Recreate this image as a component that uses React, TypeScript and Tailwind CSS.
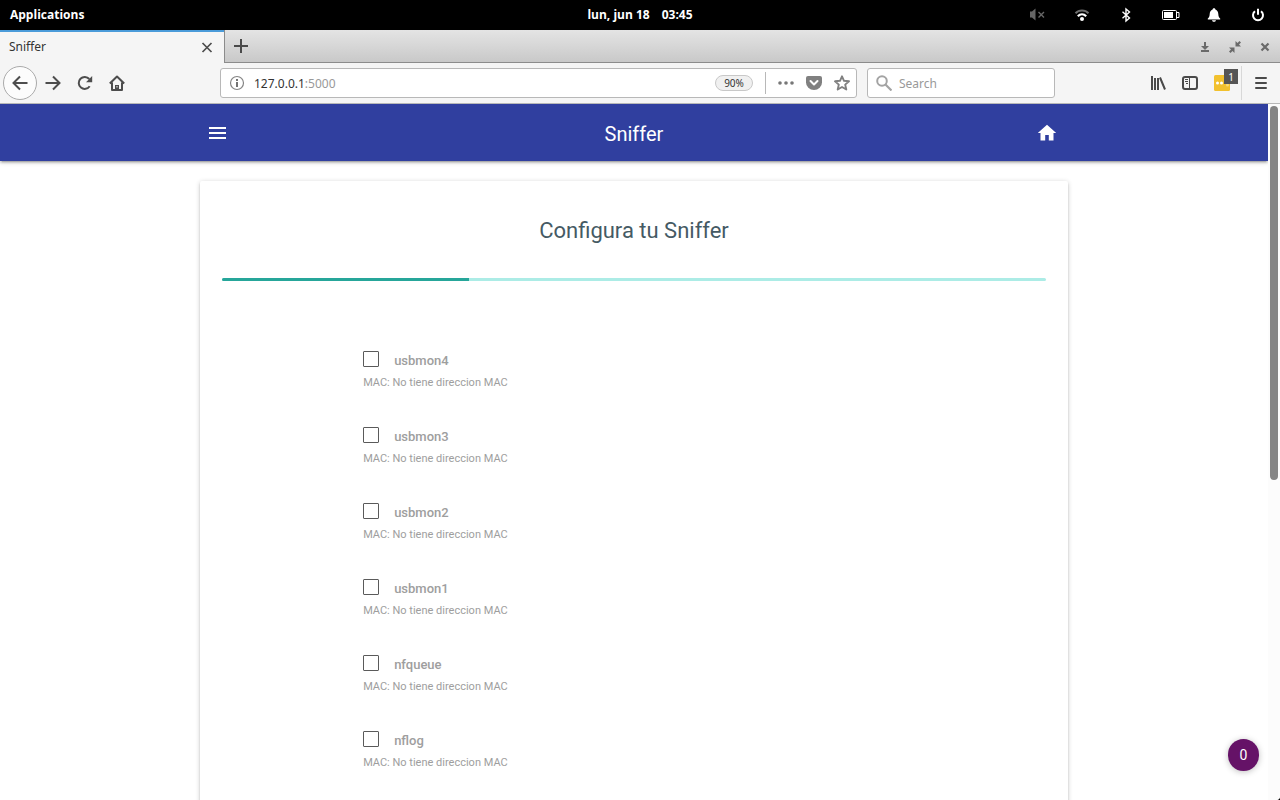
import type { ReactNode } from "react";

const interfaces = ["usbmon4", "usbmon3", "usbmon2", "usbmon1", "nfqueue", "nflog"];
const progress = 30;

function Icon({ size = 16, children }: { size?: number; children: ReactNode }) {
  return (
    <svg width={size} height={size} viewBox={`0 0 ${size} ${size}`} fill="none" aria-hidden="true" className="block shrink-0">
      {children}
    </svg>
  );
}

function SystemPanel() {
  return (
    <header className="grid h-[30px] shrink-0 grid-cols-3 items-center bg-black px-[10px] font-['Open_Sans',sans-serif] text-[12px] leading-[30px] font-bold text-white">
      <button className="justify-self-start">Applications</button>
      <button className="flex gap-3 justify-self-center">
        <span>lun, jun 18</span>
        <span>03:45</span>
      </button>
      <div className="mr-1 flex gap-7 justify-self-end">
        <button aria-label="Sound">
          <Icon>
            <path d="M-1 5h2.500L5 2v12L1.500 11H-1z" transform="translate(0.500 -0.500)" fill="#666" />
            <path d="M8.500 5l5.500 5.500M14 5L8.500 10.500" stroke="#666" strokeWidth="1.400" />
          </Icon>
        </button>
        <button aria-label="Wireless">
          <Icon>
            <path d="M1.500 6.200C5 2.500 11 2.500 14.500 6.200" stroke="#6e6e6e" strokeWidth="2" />
            <path d="M3.800 9.200C6.200 6.800 9.800 6.800 12.200 9.200" stroke="#fff" strokeWidth="2.200" />
            <circle cx="8" cy="12" r="2" fill="#fff" />
          </Icon>
        </button>
        <button aria-label="Bluetooth">
          <Icon>
            <path d="M4.500 4.800l7 6.200L8 14V2l3.500 3-7 6.200" stroke="#fff" strokeWidth="1.400" />
          </Icon>
        </button>
        <button aria-label="Battery">
          <svg width="20" height="16" viewBox="0 0 20 16" fill="none" aria-hidden="true" className="-mx-[2px] block">
            <rect x="2.500" y="3.500" width="14" height="9" rx="1" stroke="#fff" />
            <path d="M4 5h9v6H4z" fill="#fff" />
            <path d="M17 5.500h2v5h-2" stroke="#fff" />
          </svg>
        </button>
        <button aria-label="Notifications">
          <Icon>
            <path d="M8 1.200c.8 0 1.300.5 1.400 1.200 1.900.6 2.800 2.300 2.900 4.600.1 2.300.6 3.500 1.900 4.400V12.500H1.800v-1.100C3.100 10.500 3.600 9.300 3.700 7c.1-2.300 1-4 2.900-4.600C6.700 1.700 7.200 1.200 8 1.200zM6 13.300h4c-.3 1.100-1 1.500-2 1.500s-1.700-.4-2-1.500z" fill="#fff" />
          </Icon>
        </button>
        <button aria-label="Session">
          <Icon>
            <path d="M5 4.200a5 5 0 1 0 6 0M8 1.800v6" stroke="#fff" strokeWidth="2" />
          </Icon>
        </button>
      </div>
    </header>
  );
}

function TabStrip() {
  return (
    <div className="flex h-[33px] shrink-0 bg-linear-to-b from-[#e4e4e4] to-[#c8c8c8]">
      <div className="flex w-56 items-center justify-between border-t-2 border-[#4a9bd9] bg-[#f5f5f5] pr-[9px] pb-[2px] pl-[9px] text-[12px] text-[#333]">
        <span>Sniffer</span>
        <button aria-label="Close tab">
          <Icon>
            <path d="M3.500 4l9 9M12.500 4l-9 9" stroke="#4d4d4d" strokeWidth="1.700" />
          </Icon>
        </button>
      </div>
      <div className="flex grow items-center justify-between border-b border-l border-[#8c8c8c] pr-[7px] pl-2">
        <button aria-label="New tab">
          <Icon>
            <path d="M8 1v14M1 8h14" stroke="#4a4a4a" strokeWidth="2" />
          </Icon>
        </button>
        <div className="flex gap-[14px] pt-[2px]">
          <button aria-label="Minimize">
            <Icon>
              <path d="M8 3v5M4 12h8" stroke="#6a6a6a" strokeWidth="2" />
              <path d="M4 7h8l-4 4z" fill="#6a6a6a" />
            </Icon>
          </button>
          <button aria-label="Restore">
            <Icon>
              <path d="M8.500 2v5.500H14l-2-2 2-2L12.500 2l-2 2zM7.500 14V8.500H2l2 2-2 2L3.500 14l2-2z" fill="#6a6a6a" />
            </Icon>
          </button>
          <button aria-label="Close window">
            <Icon>
              <path d="M4.500 4.500l7 7M11.500 4.500l-7 7" stroke="#6a6a6a" strokeWidth="2.200" />
            </Icon>
          </button>
        </div>
      </div>
    </div>
  );
}

function Toolbar() {
  return (
    <div className="flex h-[41px] shrink-0 items-center border-b border-[#b8b8b8] bg-[#f5f5f5] pl-[3px] text-[12px] text-[#333]">
      <button aria-label="Back" className="flex size-[34px] items-center justify-center rounded-full border border-[#aaa] bg-[#fcfcfc]">
        <Icon>
          <path d="M15.500 8H1.500M8 1.500L1.500 8 8 14.500" stroke="#4d4d4d" strokeWidth="2" />
        </Icon>
      </button>
      <div className="ml-2 flex gap-4">
        <button aria-label="Forward">
          <Icon>
            <path d="M.5 8h14M8 1.500L14.500 8 8 14.500" stroke="#4d4d4d" strokeWidth="2" />
          </Icon>
        </button>
        <button aria-label="Reload">
          <Icon>
            <path d="M12.700 11.300A6 6 0 1 1 12.300 4" stroke="#4d4d4d" strokeWidth="2" />
            <path d="M15.200 1v6.200H9z" fill="#4d4d4d" />
          </Icon>
        </button>
        <button aria-label="Home">
          <Icon>
            <path d="M.8 8.500L8 1.500l7.200 7M3 7.500V15h10V7.500" stroke="#4d4d4d" strokeWidth="2" strokeLinejoin="round" />
            <path d="M6 15v-5h4v5z" fill="#4d4d4d" />
            <path d="M8 11v1.500" stroke="#f5f5f5" />
          </Icon>
        </button>
      </div>
      <div className="ml-[95px] flex h-[30px] min-w-0 grow items-center rounded-[3px] border border-[#b8b8b8] bg-white pr-[6px] pl-2">
        <button aria-label="Site information">
          <Icon>
            <circle cx="8" cy="8" r="6.500" stroke="#858585" strokeWidth="1.200" />
            <path d="M8 7v5M8 4v2" stroke="#737373" strokeWidth="2" />
          </Icon>
        </button>
        <div className="ml-[9px] grow pt-px">
          127.0.0.1<span className="text-[#999]">:5000</span>
        </div>
        <button className="h-4 w-[38px] rounded-full border border-[#c8c8c8] bg-[#f0f0f0] text-center text-[10px] leading-[14px]">90%</button>
        <div className="mr-3 ml-3 h-[22px] w-px bg-[#b8b8b8]" />
        <div className="flex gap-3">
          <button aria-label="Page actions">
            <Icon>
              <circle cx="2" cy="8" r="1.800" fill="#777" />
              <circle cx="8" cy="8" r="1.800" fill="#777" />
              <circle cx="14" cy="8" r="1.800" fill="#777" />
            </Icon>
          </button>
          <button aria-label="Save to Pocket">
            <Icon>
              <path d="M2 1h12a2 2 0 0 1 2 2v4.500a8 7.500 0 0 1-16 0V3a2 2 0 0 1 2-2z" fill="#808080" />
              <path d="M4.500 6L8 9.500 11.500 6" stroke="#fff" strokeWidth="2" strokeLinecap="round" strokeLinejoin="round" />
            </Icon>
          </button>
          <button aria-label="Bookmark">
            <Icon>
              <path d="M8 1.300l2 4.500 5 .5-3.800 3.300 1.100 4.900L8 12l-4.300 2.500 1.100-4.900L1 6.300l5-.5z" stroke="#808080" strokeWidth="1.900" strokeLinejoin="round" />
            </Icon>
          </button>
        </div>
      </div>
      <label className="ml-[10px] flex h-[30px] w-[188px] items-center gap-[7px] rounded-[3px] border border-[#b8b8b8] bg-white px-2">
        <Icon>
          <circle cx="6" cy="6" r="4.800" stroke="#a3a3a3" strokeWidth="2" />
          <path d="M9.500 9.500l6 6" stroke="#a3a3a3" strokeWidth="2.200" />
        </Icon>
        <input type="text" aria-label="Search" placeholder="Search" className="w-full min-w-0 bg-transparent pt-px outline-none placeholder:text-[#999]" />
      </label>
      <div className="ml-[95px] flex items-center gap-4">
        <button aria-label="Library">
          <Icon>
            <path d="M2 1v14M5 3v12M8 3v12M10 2.500l5 12" stroke="#4a4a4a" strokeWidth="2" />
          </Icon>
        </button>
        <button aria-label="Sidebars">
          <Icon>
            <rect x="1" y="2" width="14" height="12" rx="2" stroke="#4a4a4a" strokeWidth="2" />
            <path d="M7.500 3v10M3 4.500h3M3 6.500h3M4 8.500h2" stroke="#4a4a4a" />
          </Icon>
        </button>
        <button aria-label="Extension" className="relative">
          <Icon>
            <rect width="16" height="16" rx="1.500" fill="#f2c12e" />
            <circle cx="3.500" cy="8" r="1.500" fill="#fff" />
            <circle cx="7.500" cy="8" r="1.500" fill="#fff" />
            <circle cx="13.500" cy="10" r="1.500" fill="#f7d978" />
          </Icon>
          <span className="absolute -top-[6px] left-[10px] flex h-[15px] w-[14px] items-center justify-center bg-[#555] text-[10px] leading-none text-white">1</span>
        </button>
      </div>
      <div className="mr-[11px] ml-[11px] h-[34px] w-px bg-[#d8d8d8]" />
      <button aria-label="Menu" className="mr-[11px]">
        <Icon>
          <path d="M3 3h10M3 8h10M3 13h10" stroke="#4a4a4a" strokeWidth="2" strokeLinecap="round" />
        </Icon>
      </button>
    </div>
  );
}

function PageNav() {
  return (
    <nav className="relative shrink-0 bg-[#303f9f] shadow-[0_2px_2px_0_rgba(0,0,0,0.14),0_3px_1px_-2px_rgba(0,0,0,0.12),0_1px_5px_0_rgba(0,0,0,0.2)]">
      <div className="mx-auto grid h-[57px] w-[70%] grid-cols-3 items-center">
        <button aria-label="Open menu" className="ml-4 justify-self-start">
          <Icon size={22}>
            <path d="M3 6h17M3 11h17M3 16h17" stroke="#fff" strokeWidth="2" />
          </Icon>
        </button>
        <a href="#" className="justify-self-center pt-[2px] text-[20px] leading-6 text-white">Sniffer</a>
        <a href="#" aria-label="Inicio" className="mr-5 justify-self-end">
          <Icon size={22}>
            <path d="M9.200 18.500v-5.500h3.600v5.500h4.700v-7.500H20.200L11 2.700 1.800 11h2.700v7.500z" fill="#fff" />
          </Icon>
        </a>
      </div>
    </nav>
  );
}

function InterfaceOption({ name }: { name: string }) {
  return (
    <li className="h-[76px]">
      <label className="flex w-fit items-start gap-[15px] text-[13px] leading-5 font-medium text-[#9e9e9e]">
        <input type="checkbox" name="interface" value={name} className="size-4 appearance-none rounded-[1px] border border-[#5a5a5a] checked:bg-[#26a69a]" />
        {name}
      </label>
      <p className="mt-1 text-[11px] leading-4 text-[#9e9e9e]">MAC: No tiene direccion MAC</p>
    </li>
  );
}

export default function App() {
  return (
    <div className="flex h-screen flex-col overflow-hidden bg-black font-['Noto_Sans',sans-serif]">
      <SystemPanel />
      <div className="relative flex min-h-0 grow flex-col overflow-hidden rounded-br-[4px] bg-white">
        <TabStrip />
        <Toolbar />
        <div className="flex min-h-0 grow">
          <div className="flex min-w-0 grow flex-col overflow-hidden font-[Roboto,sans-serif]">
            <PageNav />
            <main className="mx-auto w-[70%] px-[10px] pt-5">
              <section className="rounded-[2px] bg-white px-[22px] pt-[34px] pb-6 shadow-[0_2px_2px_0_rgba(0,0,0,0.14),0_3px_1px_-2px_rgba(0,0,0,0.12),0_1px_5px_0_rgba(0,0,0,0.2)]">
                <h1 className="text-center text-[22px] leading-8 text-[#455a64]">Configura tu Sniffer</h1>
                <div role="progressbar" aria-valuenow={progress} aria-valuemin={0} aria-valuemax={100} aria-label="Progreso" className="mt-[31px] h-[3px] overflow-hidden rounded-[2px] bg-[#acece6]">
                  <div className="h-full bg-[#26a69a]" style={{ width: `${progress}%` }} />
                </div>
                <form className="-mx-[11px] mt-[70px] grid grid-cols-6">
                  <ul className="col-span-4 col-start-2 px-[11px]">
                    {interfaces.map((name) => (
                      <InterfaceOption key={name} name={name} />
                    ))}
                  </ul>
                </form>
              </section>
            </main>
          </div>
          <div className="w-3 shrink-0 bg-[#fcfcfc] p-[2px]">
            <div className="h-[54%] rounded-full bg-[#858585]" />
          </div>
        </div>
        <button className="absolute right-[21px] bottom-[29px] flex h-8 w-[31px] items-center justify-center rounded-full bg-[#651267] font-[Roboto,sans-serif] text-[14px] text-white shadow-[0_1px_6px_rgba(0,0,0,0.25)]">0</button>
      </div>
    </div>
  );
}
